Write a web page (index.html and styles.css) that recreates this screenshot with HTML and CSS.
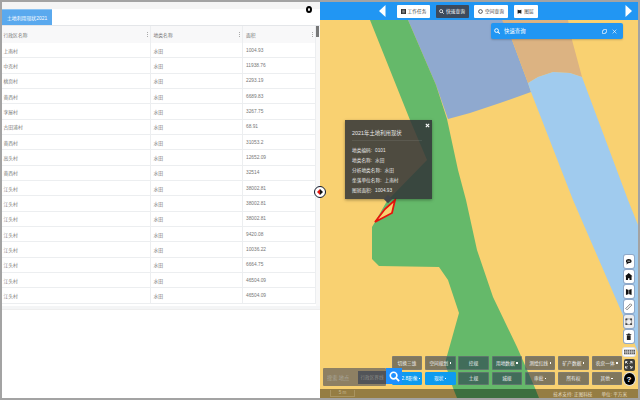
FILE: index.html
```html
<!DOCTYPE html>
<html lang="zh">
<head>
<meta charset="utf-8">
<title>土地利用现状</title>
<link rel="stylesheet" href="styles.css">
</head>
<body>
<div class="app">
  <section class="panel">
    <div class="panel-top"></div>
    <div class="tabs"><span class="tab">土地利用现状2021</span></div>
    <button class="close-ring" aria-label="关闭"></button>
    <div class="table-wrap">
      <div class="table">
        <div class="row head"><div class="cell c1">行政区名称<i class="sort"></i></div><div class="cell c2">地类名称<i class="sort"></i></div><div class="cell c3">面积<i class="sort"></i></div></div>
        <div class="row"><div class="cell c1">上南村</div><div class="cell c2">水田</div><div class="cell c3">1004.93</div></div>
        <div class="row"><div class="cell c1">中克村</div><div class="cell c2">水田</div><div class="cell c3">11938.76</div></div>
        <div class="row"><div class="cell c1">桃页村</div><div class="cell c2">水田</div><div class="cell c3">2293.19</div></div>
        <div class="row"><div class="cell c1">黄西村</div><div class="cell c2">水田</div><div class="cell c3">6689.83</div></div>
        <div class="row"><div class="cell c1">李屋村</div><div class="cell c2">水田</div><div class="cell c3">3267.75</div></div>
        <div class="row"><div class="cell c1">古田浦村</div><div class="cell c2">水田</div><div class="cell c3">68.91</div></div>
        <div class="row"><div class="cell c1">黄西村</div><div class="cell c2">水田</div><div class="cell c3">31053.2</div></div>
        <div class="row"><div class="cell c1">高头村</div><div class="cell c2">水田</div><div class="cell c3">12652.09</div></div>
        <div class="row"><div class="cell c1">黄西村</div><div class="cell c2">水田</div><div class="cell c3">32514</div></div>
        <div class="row"><div class="cell c1">江头村</div><div class="cell c2">水田</div><div class="cell c3">38002.81</div></div>
        <div class="row"><div class="cell c1">江头村</div><div class="cell c2">水田</div><div class="cell c3">38002.81</div></div>
        <div class="row"><div class="cell c1">江头村</div><div class="cell c2">水田</div><div class="cell c3">38002.81</div></div>
        <div class="row"><div class="cell c1">江头村</div><div class="cell c2">水田</div><div class="cell c3">9420.08</div></div>
        <div class="row"><div class="cell c1">江头村</div><div class="cell c2">水田</div><div class="cell c3">10036.22</div></div>
        <div class="row"><div class="cell c1">江头村</div><div class="cell c2">水田</div><div class="cell c3">6664.75</div></div>
        <div class="row"><div class="cell c1">江头村</div><div class="cell c2">水田</div><div class="cell c3">46504.09</div></div>
        <div class="row"><div class="cell c1">江头村</div><div class="cell c2">水田</div><div class="cell c3">46504.09</div></div>
      </div>
      <div class="scrollbar"><div class="thumb"></div></div>
    </div>
    <div class="table-foot"></div>
  </section>

  <section class="map">
    <svg class="land" viewBox="320 2 318 396" aria-hidden="true">
      <rect x="320" y="2" width="318" height="396" fill="#f9d171"/>
      <path d="M408 20H508L512 40L528 83L531 92L500 103L470 113L448 119L436 85Z" fill="#8fa9cf"/>
      <path d="M502 20H568L572 40L582 77L570 73L553 72L538 77L528 83L512 40Z" fill="#dcb382"/>
      <path d="M528 83L538 77L553 72L570 73L582 77L628 200L638 225V352L622 313L573 200L531 92Z" fill="#a0cbee"/>
      <path d="M370 20H408L436 85L447 119L458 170L466 200L477 250L493 297L517 347L535 388L539 398H457L453 388L445 363L459 313L448 280L439 267L379 266L372 259V227L375 222L387 201L427 160L410 120Z" fill="#65b96a"/>
      <path d="M375 222L385 209L395 200L392 213Z" fill="#f9d171" stroke="#e8120c" stroke-width="1.8"/>
    </svg>

    <header class="topbar">
      <svg class="arrow" viewBox="0 0 7 12"><path d="M6.5 0V12L0 6Z"/></svg>
      <button class="tbtn"><svg viewBox="0 0 8 8"><path d="M0 0H8V8H0Z" fill="#333"/><path d="M2 2H6M2 4H6M2 6H6" stroke="#fff" stroke-width=".7"/></svg>工作任务</button>
      <button class="tbtn active"><svg viewBox="0 0 8 8"><circle cx="3.4" cy="3.4" r="2.5" fill="none" stroke="#fff" stroke-width="1.2"/><path d="M5 5L7.6 7.6" stroke="#fff" stroke-width="1.3"/></svg>快速查询</button>
      <button class="tbtn"><svg viewBox="0 0 8 8"><circle cx="4" cy="4" r="3" fill="none" stroke="#333" stroke-width="1.3"/></svg>空间查询</button>
      <button class="tbtn"><svg viewBox="0 0 8 8"><path d="M1 1L4 2L7 1V7.5L4 6.5L1 7.5Z" fill="#222"/></svg>图层</button>
      <svg class="arrow" viewBox="0 0 7 12"><path d="M.5 0V12L7 6Z"/></svg>
    </header>

    <div class="quick">
      <svg class="q-search" viewBox="0 0 8 8"><circle cx="3.4" cy="3.4" r="2.5" fill="none" stroke="#fff" stroke-width="1.3"/><path d="M5 5L7.6 7.6" stroke="#fff" stroke-width="1.4"/></svg>
      <span class="q-title">快速查询</span>
      <svg class="q-copy" viewBox="0 0 8 8"><path d="M2.5 .8H7.2V5.5H5.5V7.2H.8V2.5H2.5Z" fill="none" stroke="#fff"/></svg>
      <svg class="q-x" viewBox="0 0 8 8"><path d="M1 1L7 7M7 1L1 7" stroke="#fff" stroke-width="1"/></svg>
    </div>

    <div class="popup">
      <svg class="pop-x" viewBox="0 0 6 6"><path d="M1 1L5 5M5 1L1 5" stroke="#fff" stroke-width="1.3"/></svg>
      <h2 class="pop-title">2021年土地利用现状</h2>
      <p class="pop-line"><span>地类编码:</span><span>0101</span></p>
      <p class="pop-line"><span>地类名称:</span><span>水田</span></p>
      <p class="pop-line"><span>分析地类名称:</span><span>水田</span></p>
      <p class="pop-line"><span>坐落单位名称:</span><span>上南村</span></p>
      <p class="pop-line"><span>图斑面积:</span><span>1004.93</span></p>
      <i class="pop-tail"></i>
    </div>

    <div class="tools">
      <button class="tool"><svg viewBox="0 0 8 8"><path d="M1 3.5C1 1.8 2.5 1 4 1S7 1.8 7 3.5 5.5 5.5 3.5 5.5L1.5 7L2 5C1.3 4.8 1 4.2 1 3.5Z" fill="#111"/><path d="M2.5 3.4H5.5" stroke="#fff" stroke-width=".8"/></svg></button>
      <button class="tool"><svg viewBox="0 0 8 8"><path d="M4 0L8 3.5H7V8H4.8V5.5H3.2V8H1V3.5H0Z" fill="#111"/></svg></button>
      <button class="tool"><svg viewBox="0 0 8 8"><path d="M1 1L4 2L7 1V7.5L4 6.5L1 7.5Z" fill="#111"/><path d="M4 2V6.5" stroke="#fff" stroke-width=".6"/></svg></button>
      <button class="tool"><svg viewBox="0 0 8 8"><path d="M.8 5.8L5.8 .8L7.2 2.2L2.2 7.2Z" fill="none" stroke="#555" stroke-width=".8"/></svg></button>
      <button class="tool tool-alt"><svg viewBox="0 0 8 8"><path d="M1 1H7V7H1Z" fill="none" stroke="#777" stroke-width=".7"/><path d="M.5 .5H2.5V2.5H.5ZM5.5 .5H7.5V2.5H5.5ZM.5 5.5H2.5V7.5H.5ZM5.5 5.5H7.5V7.5H5.5Z" fill="#444"/></svg></button>
      <button class="tool"><svg viewBox="0 0 8 8"><path d="M2 2.3H6V7.5H2ZM1.3 1.3H6.7V2H1.3ZM3 .5H5V1.3H3Z" fill="#222"/></svg></button>
      <button class="tool tool-wide"><svg viewBox="0 0 12 6"><path d="M0 .5H12V5.5H0Z" fill="#555"/><path d="M2 .5V5.5M4 .5V5.5M6 .5V5.5M8 .5V5.5M10 .5V5.5M0 3H12" stroke="#fff" stroke-width=".6"/></svg></button>
      <button class="tool tool-dark"><svg viewBox="0 0 8 8"><path d="M.5 2.5V.5H2.5M5.5 .5H7.5V2.5M7.5 5.5V7.5H5.5M2.5 7.5H.5V5.5M1 1L2.8 2.8M7 1L5.2 2.8M1 7L2.8 5.2M7 7L5.2 5.2" fill="none" stroke="#fff" stroke-width=".9"/></svg></button>
      <button class="tool tool-help">?</button>
    </div>

    <div class="layers">
      <button class="lbtn">切换三维</button>
      <button class="lbtn">空间规划<i class="dot"></i></button>
      <button class="lbtn">控规</button>
      <button class="lbtn">用地数据<i class="dot"></i></button>
      <button class="lbtn">测绘红线<i class="dot"></i></button>
      <button class="lbtn">矿产数据<i class="dot"></i></button>
      <button class="lbtn">农房一体<i class="dot"></i></button>
      <button class="lbtn on first">2.8影像<i class="dot"></i></button>
      <button class="lbtn on">现状<i class="dot"></i></button>
      <button class="lbtn">土规</button>
      <button class="lbtn">城规</button>
      <button class="lbtn">审批<i class="dot"></i></button>
      <button class="lbtn">所有权</button>
      <button class="lbtn">其他<i class="dot"></i></button>
    </div>

    <div class="place">
      <div class="place-box"><span class="place-text">搜索 地点</span><span class="place-region">行政区界线</span></div>
      <button class="place-go"><svg viewBox="0 0 12 12"><circle cx="5" cy="5" r="3.6" fill="none" stroke="#fff" stroke-width="1.8"/><path d="M7.6 7.6L11 11" stroke="#fff" stroke-width="2"/></svg></button>
    </div>

    <footer class="status">
      <span class="scale">5 m</span>
      <span class="status-right"><span>技术支持: 正图科技</span><span>单位: 平方米</span></span>
    </footer>
  </section>

  <button class="toggle" aria-label="切换"><i class="tl"></i><i class="tr"></i></button>
</div>
</body>
</html>
```
FILE: styles.css
```css
* { box-sizing: border-box; }
html, body { margin: 0; height: 100%; }
body { font-family: "Liberation Sans", "Noto Sans CJK SC", sans-serif; overflow: hidden; }
button { font: inherit; margin: 0; padding: 0; border: 0; cursor: pointer; }

.app { position: relative; display: flex; width: 640px; height: 400px; padding: 2px; background: #a3a3a3; }

/* left panel */
.panel { position: relative; width: 318px; display: flex; flex-direction: column; background: #fff; color: #767676; font-size: 4.8px; }
.panel-top { height: 7px; background: #f5f5f5; }
.tabs { height: 17px; border-bottom: 1px solid #e4e6e9; flex: none; }
.tab { display: flex; align-items: center; justify-content: center; width: 50px; height: 16px; background: #5aa9ee; color: #fff; font-size: 4.9px; border-top: 1px solid #8cc4f3; }
.close-ring { position: absolute; top: 4px; right: 8px; width: 6px; height: 7px; border: 2px solid #000; border-radius: 50%; background: #fff; }

.table-wrap { display: flex; height: 280px; flex: none; overflow: hidden; }
.table { width: 314px; flex: none; }
.row { display: flex; height: 15.33px; border-bottom: 1px solid #eceef0; }
.row.head { height: 17px; background: #f8f8f9; border-bottom: 0; }
.cell { display: flex; align-items: center; padding-left: 1.5px; position: relative; border-right: 1px solid #eceef0; }
.c1 { width: 149px; }
.c2 { width: 92px; padding-left: 2.5px; }
.c3 { width: 73px; padding-left: 3px; }
.sort { position: absolute; right: 2px; top: 6px; width: 1px; height: 5px; border-left: 1px dotted #aaa; }
.scrollbar { flex: 1; background: #f8f8f8; }
.thumb { width: 3px; height: 11px; background: #777; }
.table-foot { height: 4px; background: #f4f5f6; flex: none; border-bottom: 1px solid #eee; }

/* map */
.map { position: relative; flex: 1; display: flex; flex-direction: column; overflow: hidden; }
.land { position: absolute; inset: 0; width: 318px; height: 396px; display: block; }

.topbar { position: relative; height: 18px; background: #2196f3; display: flex; align-items: center; padding-left: 59px; }
.arrow { width: 7px; height: 12px; fill: #fff; flex: none; }
.arrow:first-child { margin-right: 11px; }
.arrow:last-child { margin-left: 87px; }
.tbtn { display: flex; align-items: center; justify-content: center; gap: 2px; height: 13px; padding: 0 3px; margin-right: 5.5px; background: #fff; color: #444; font-size: 4.7px; border-radius: 1px; white-space: nowrap; }
.tbtn svg { width: 5px; height: 5px; flex: none; }
.tbtn:nth-of-type(1) { width: 33px; }
.tbtn:nth-of-type(2) { width: 33px; }
.tbtn:nth-of-type(3) { width: 34px; }
.tbtn:nth-of-type(4) { width: 24px; margin-right: 0; }
.tbtn.active { background: #3d4a5c; color: #fff; }

.quick { position: absolute; top: 21px; left: 171px; width: 132px; height: 16px; background: #2196f3; border-radius: 2px; display: flex; align-items: center; padding: 0 4px 0 3px; color: #fff; font-size: 5.4px; box-shadow: 0 1px 2px rgba(0,0,0,.2); }
.q-search { width: 6px; height: 6px; margin-right: 4px; }
.q-title { flex: 1; }
.q-copy { width: 5px; height: 5px; margin-right: 5px; }
.q-x { width: 5px; height: 5px; margin-right: 2px; }

.popup { position: absolute; left: 25px; top: 118px; width: 87px; height: 79px; padding: 10px 7px 0; background: rgba(50,52,56,.86); color: #e8e8e8; font-size: 4.7px; box-shadow: 0 1px 3px rgba(0,0,0,.35); }
.pop-title { margin: 0 3px 5px 0; padding-bottom: 3px; font-size: 5.4px; line-height: 7px; font-weight: 400; border-bottom: 1px solid rgba(255,255,255,.08); }
.pop-line { margin: 0; display: flex; gap: 3px; height: 10px; line-height: 10px; }
.pop-x { position: absolute; top: 2.5px; right: 2px; width: 5px; height: 5px; }
.pop-tail { position: absolute; left: 40px; bottom: -3px; width: 6px; height: 6px; transform: rotate(45deg); background: #434549; }

.tools { position: absolute; right: 3px; top: 253px; width: 12px; display: flex; flex-direction: column; align-items: center; }
.tool { display: flex; align-items: center; justify-content: center; width: 10px; height: 13px; margin-bottom: 2px; background: #fff; border-radius: 2px; box-shadow: 0 0 0 1px #8fa8c8; }
.tool svg { width: 7.5px; height: 7.5px; }
.tool-alt { background: #eee; }
.tool-wide { width: 12px; height: 8px; margin: 3px 0 3px; box-shadow: 0 0 0 1px #dfe3ea; }
.tool-wide svg { width: 11px; height: 6px; }
.tool-dark { width: 11px; height: 12px; background: #3e3f3a; box-shadow: none; }
.tool-help { width: 11px; height: 12px; background: #000; color: #fff; font-size: 8px; font-weight: 700; border-radius: 50%; box-shadow: 0 0 0 1px #ddd; }

.layers { position: absolute; right: 16px; bottom: 13px; display: grid; grid-template-columns: repeat(7, 30.5px); grid-auto-rows: 13.5px; gap: 2px 2.8px; }
.lbtn { display: flex; align-items: center; justify-content: center; gap: 1.5px; background: rgba(40,53,80,.58); color: #eee; font-size: 4.7px; border: 1px solid rgba(130,130,130,.45); border-radius: 1px; white-space: nowrap; }
.lbtn.on { background: #0e9bef; border-color: #0e9bef; color: #fff; }
.lbtn.first { padding-left: 8px; }
.dot { width: 1.5px; height: 1.5px; background: #fff; flex: none; }

.place { position: absolute; left: 3px; bottom: 12px; display: flex; align-items: flex-start; height: 18px; }
.place-box { width: 63px; height: 18px; display: flex; align-items: center; padding-left: 4px; background: rgba(70,74,90,.6); border-radius: 1px; color: #a9a69a; font-size: 5.2px; position: relative; }
.place-text { width: 31px; flex: none; }
.place-region { flex: none; height: 13px; width: 28px; display: flex; align-items: center; justify-content: center; background: rgba(60,66,85,.72); color: #8c8c88; font-size: 4.6px; white-space: nowrap; }
.place-go { width: 16px; height: 16px; background: #1e90ff; display: flex; align-items: center; justify-content: center; }
.place-go svg { width: 11px; height: 11px; }

.status { position: absolute; left: 0; right: 0; bottom: 0; height: 9px; display: flex; align-items: center; justify-content: space-between; padding: 0 11px 0 10px; background: rgba(0,0,0,.4); color: #e4dcc4; font-size: 4.6px; }
.scale { width: 25px; text-align: center; border: 1px solid rgba(185,168,120,.55); border-top: 0; line-height: 6px; color: #c5b68e; }
.status-right { display: flex; gap: 9px; }

.toggle { position: absolute; left: 314px; top: 186px; width: 12px; height: 12px; border: 1.2px solid #10182a; border-radius: 50%; background: #fff; display: flex; align-items: center; justify-content: center; gap: .5px; }
.tl, .tr { width: 0; height: 0; border-top: 3px solid transparent; border-bottom: 3px solid transparent; }
.tl { border-right: 3px solid #e0120c; }
.tr { border-left: 3px solid #111; }
```
